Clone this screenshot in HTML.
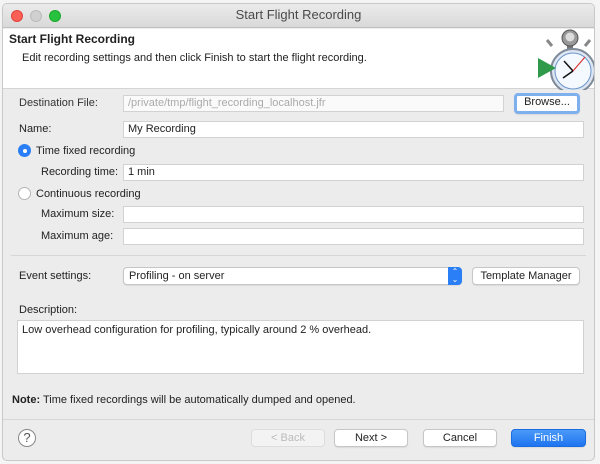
<!DOCTYPE html>
<html><head><style>
*{box-sizing:border-box;margin:0;padding:0}
body{width:600px;height:464px;background:#f4f4f4;font-family:"Liberation Sans",sans-serif;font-size:11px;color:#222;position:relative;overflow:hidden}
.win{position:absolute;left:2px;top:3px;width:593px;height:458px;background:#ececec;border-radius:5px;border:1px solid #c8c8c8;overflow:hidden}
.title{position:absolute;left:0;top:0;right:0;height:24px;background:linear-gradient(#ebebeb,#d9d9d9);border-bottom:1px solid #c0c0c0;text-align:center;line-height:22px;font-size:13px;color:#4a4a4a}
.dot{position:absolute;top:6px;width:12px;height:12px;border-radius:50%}
.hdr{position:absolute;left:0;top:25px;right:0;height:60px;background:#fff;border-bottom:1px solid #d4d4d4}
.a{position:absolute;white-space:nowrap}
.in{position:absolute;background:#fff;border:1px solid #d2d2d2;height:17px;padding-left:4px;line-height:15px}
.btn{position:absolute;background:#fff;border:1px solid #c6c6c6;border-radius:4px;height:18px;text-align:center;line-height:16px;box-shadow:0 1px 1px rgba(0,0,0,.08)}
.sep{position:absolute;left:8px;right:8px;height:1px;background:#d6d6d6}
.radio{position:absolute;width:13px;height:13px;border-radius:50%}
</style></head><body>
<div class="win">
<div class="title">Start Flight Recording
<div class="dot" style="left:8px;background:#fc5f57;border:1px solid #e0443e"></div>
<div class="dot" style="left:27px;background:#d0d0d0;border:1px solid #bbb"></div>
<div class="dot" style="left:46px;background:#29c140;border:1px solid #1aab29"></div>
</div>
<div class="hdr">
<div class="a" style="left:6px;top:3px;font-weight:bold;font-size:12px">Start Flight Recording</div>
<div class="a" style="left:19px;top:23px">Edit recording settings and then click Finish to start the flight recording.</div>
<svg style="position:absolute;left:527px;top:-5px" width="66" height="66" viewBox="0 0 66 66">
<line x1="22" y1="22" x2="17" y2="16" stroke="#888" stroke-width="3"/>
<line x1="55" y1="22" x2="60" y2="16" stroke="#888" stroke-width="3"/>
<rect x="37" y="18" width="6" height="8" fill="#777"/>
<circle cx="40" cy="14" r="8" fill="#999" stroke="#555"/><circle cx="40" cy="13" r="4.5" fill="#ddd"/>
<circle cx="43" cy="47" r="22" fill="#dde6f2" stroke="#7f8a99" stroke-width="2"/>
<circle cx="43" cy="47" r="18" fill="#f4f8ff" stroke="#6b95c9"/>
<polygon points="8,34 8,54 26,44" fill="#2f9b4a"/>
<line x1="43" y1="47" x2="34" y2="37" stroke="#111" stroke-width="1.5"/>
<line x1="43" y1="47" x2="33" y2="54" stroke="#111" stroke-width="1.5"/>
<line x1="43" y1="47" x2="55" y2="33" stroke="#d22" stroke-width="1"/>
</svg>
</div>
<div class="a" style="left:16px;top:93px;color:#333">Destination File:</div>
<div class="in" style="left:120px;top:91px;width:381px;color:#aaa;background:#fafafa">/private/tmp/flight_recording_localhost.jfr</div>
<div class="btn" style="left:511px;top:89px;width:66px;border:3px solid #7fb0ee;line-height:13px;height:21px">Browse...</div>
<div class="a" style="left:16px;top:119px">Name:</div>
<div class="in" style="left:120px;top:117px;width:461px">My Recording</div>
<div class="radio" style="left:15px;top:140px;background:#2b7ff6"><div style="position:absolute;left:4.5px;top:4.5px;width:4px;height:4px;border-radius:50%;background:#fff"></div></div>
<div class="a" style="left:33px;top:141px">Time fixed recording</div>
<div class="a" style="left:38px;top:162px">Recording time:</div>
<div class="in" style="left:120px;top:160px;width:461px">1 min</div>
<div class="radio" style="left:15px;top:183px;background:#fff;border:1px solid #b5b5b5"></div>
<div class="a" style="left:33px;top:184px">Continuous recording</div>
<div class="a" style="left:38px;top:204px">Maximum size:</div>
<div class="in" style="left:120px;top:202px;width:461px"></div>
<div class="a" style="left:38px;top:226px">Maximum age:</div>
<div class="in" style="left:120px;top:224px;width:461px"></div>
<div class="sep" style="top:251px"></div>
<div class="a" style="left:16px;top:266px">Event settings:</div>
<div class="btn" style="left:120px;top:263px;width:339px;text-align:left;padding-left:5px;border-radius:4px">Profiling - on server
<div style="position:absolute;right:-1px;top:-1px;width:14px;height:18px;background:#2b7ff6;border-radius:0 4px 4px 0;color:#fff;font-size:8px;line-height:8px;text-align:center;padding-top:1px">⌃<br>⌄</div></div>
<div class="btn" style="left:469px;top:263px;width:108px">Template Manager</div>
<div class="a" style="left:16px;top:300px">Description:</div>
<div class="in" style="left:14px;top:316px;width:567px;height:54px;padding-top:2px">Low overhead configuration for profiling, typically around 2 % overhead.</div>
<div class="a" style="left:9px;top:390px"><b>Note:</b> Time fixed recordings will be automatically dumped and opened.</div>
<div class="sep" style="top:415px;left:0;right:0"></div>
<div style="position:absolute;left:15px;top:425px;width:18px;height:18px;border-radius:50%;border:1px solid #888;background:#fff;text-align:center;line-height:16px;font-size:13px;color:#555">?</div>
<div class="btn" style="left:248px;top:425px;width:74px;color:#bbb;background:#f3f3f3;border-color:#ddd;box-shadow:none">&lt; Back</div>
<div class="btn" style="left:331px;top:425px;width:74px">Next &gt;</div>
<div class="btn" style="left:420px;top:425px;width:74px">Cancel</div>
<div class="btn" style="left:508px;top:425px;width:75px;background:linear-gradient(#4a9af8,#1e74f0);border-color:#1a6de0;color:#fff">Finish</div>
</div>
</body></html>
